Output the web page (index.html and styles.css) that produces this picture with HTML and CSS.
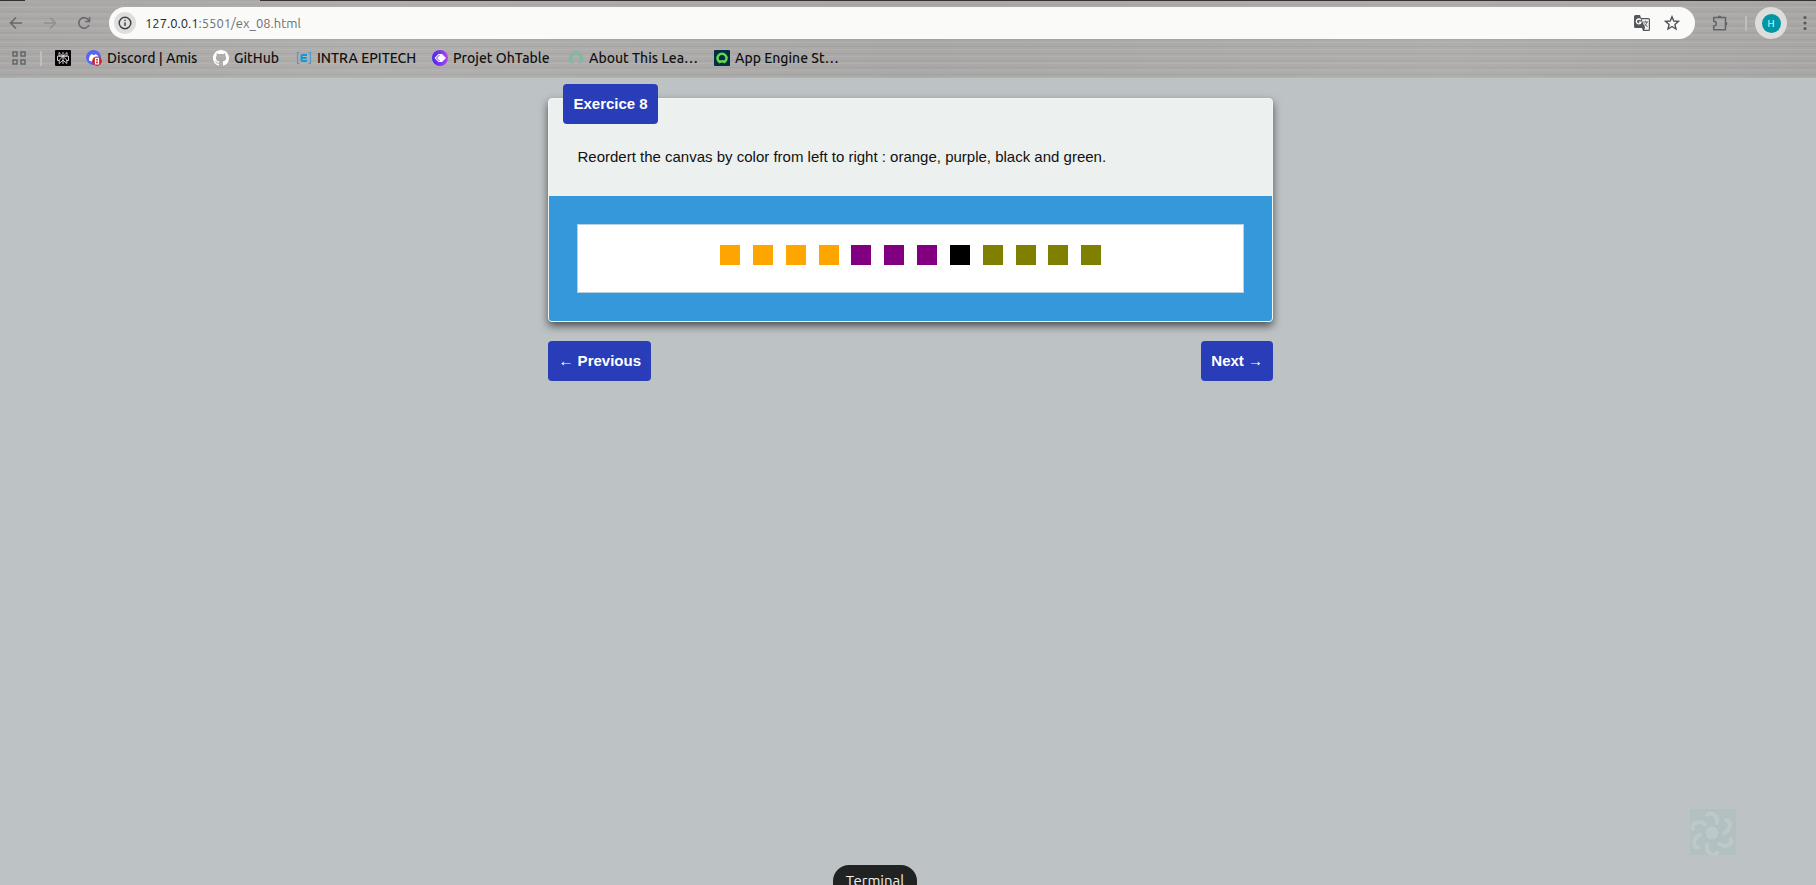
FILE: index.html
```html
<!DOCTYPE html>
<html lang="en">
<head>
<meta charset="utf-8">
<title>Exercice 8</title>
<link rel="stylesheet" href="styles.css">
</head>
<body>
<header class="browser">
  <div class="tab-strip"><span class="tab-active"></span></div>
  <div class="toolbar">
    <nav class="nav-buttons" aria-label="Navigation">
      <button class="icon-button" aria-label="Back"><svg width="14" height="14" viewBox="0 0 14 14"><path d="M13 7H2M7 1.5L1.5 7L7 12.500" fill="none" stroke="#66686b" stroke-width="1.6"/></svg></button>
      <button class="icon-button" aria-label="Forward"><svg width="14" height="14" viewBox="0 0 14 14"><path d="M1 7H12M7 1.500L12.500 7L7 12.500" fill="none" stroke="#8f8f90" stroke-width="1.600"/></svg></button>
      <button class="icon-button" aria-label="Reload"><svg width="14" height="14" viewBox="0 0 14 14"><path d="M12 9A5.300 5.300 0 1 1 11.500 4L12.600 5.200" fill="none" stroke="#66686b" stroke-width="1.600"/><path d="M13.300 1V6.200H8.100V4.800H11.800V1Z" fill="#66686b"/></svg></button>
    </nav>
    <div class="address-bar">
      <button class="site-info" aria-label="Site information"><svg width="14" height="14" viewBox="0 0 14 14"><circle cx="7" cy="7" r="5.800" fill="none" stroke="#3c4043" stroke-width="1.400"/><path d="M7 6.200V10M7 3.700V5.100" stroke="#3c4043" stroke-width="1.400"/></svg></button>
      <div class="address" aria-label="Address"><span class="address-host">127.0.0.1</span>:5501/ex_08.html</div>
      <button class="icon-button" aria-label="Translate"><svg width="16" height="16" viewBox="0 0 16 16"><path d="M1.500 0H6L7 3H14.500Q16 3 16 4.500V14.500Q16 16 14.500 16H9L8 13H1.500Q0 13 0 11.500V1.500Q0 0 1.500 0Z" fill="#55585b"/><path d="M7.600 4.200H14.800V14.800H10L11.100 13Z" fill="#f4f4f4"/><path d="M6.700 5A2.400 2.400 0 1 0 7 7.200H4.900" fill="none" stroke="#fff" stroke-width="1.300"/><path d="M9.200 7H14M11.600 5.800V7M13 7Q12.300 10.200 9.800 11.600M10.400 8.500L13.600 12" fill="none" stroke="#66686b"/></svg></button>
      <button class="icon-button" aria-label="Bookmark this page"><svg width="16" height="16" viewBox="0 0 16 16"><path d="M8 1.700L9.800 6L14.500 6.400L10.900 9.400L12 14L8 11.500L4 14L5.100 9.400L1.500 6.400L6.200 6Z" fill="none" stroke="#505356" stroke-width="1.400"/></svg></button>
    </div>
    <div class="toolbar-end">
      <button class="icon-button" aria-label="Extensions"><svg width="17" height="17" viewBox="0 0 17 17"><path d="M1.700 2.500H13.500V14.800H1.700V11C5 10.900 5 6.400 1.700 6.300Z" fill="none" stroke="#626467" stroke-width="1.500" stroke-linejoin="round"/><path d="M5.800 2.400A1.800 1.800 0 0 1 9.400 2.400ZM13.500 6.800A1.900 1.900 0 0 1 13.500 10.600Z" fill="#626467"/></svg></button>
      <span class="divider"></span>
      <button class="profile" aria-label="Profile"><span class="profile-initial">H</span></button>
      <button class="icon-button" aria-label="Menu"><svg width="4" height="16" viewBox="0 0 4 16"><g fill="#58595b"><circle cx="2" cy="2.500" r="1.600"/><circle cx="2" cy="8" r="1.600"/><circle cx="2" cy="13.500" r="1.600"/></g></svg></button>
    </div>
  </div>
  <nav class="bookmarks" aria-label="Bookmarks">
    <button class="icon-button" aria-label="Tab groups"><svg width="14" height="14" viewBox="0 0 14 14"><path d="M1 1H5V5H1ZM9 1H13V5H9ZM1 9H5V13H1ZM9 9H13V13H9Z" fill="none" stroke="#626467" stroke-width="1.500"/></svg></button>
    <span class="divider"></span>
    <a class="bookmark" href="#" aria-label="Perplexity"><svg width="16" height="16" viewBox="0 0 16 16"><rect width="16" height="16" rx="1" fill="#050505"/><path d="M8 2V14M4 2.500L8 6.300L12 2.500V6H4ZM2.500 6.200H13.500V10.500H11.800M4.200 10.500H2.500V6.200M8 6.500L4.200 10V13.500L8 10.200L11.800 13.500V10Z" fill="none" stroke="#ddd" stroke-width=".9"/></svg></a>
    <a class="bookmark" href="#"><svg width="16" height="16" viewBox="0 0 16 16"><circle cx="7.500" cy="7.500" r="7.500" fill="#5865f2"/><path d="M3 10.500Q3 6 5 4.500L6.500 4.300L7 5H8.500L9 4.300Q11 4.300 12.500 6.500V10L5 11.500Z" fill="#fff"/><circle cx="11" cy="11.200" r="4.800" fill="#d3202e"/><path d="M9.500 8.300H12.500V13.800H9.500ZM9.500 11H12.500" fill="none" stroke="#fff" stroke-width="1.200"/></svg><span>Discord | Amis</span></a>
    <a class="bookmark" href="#"><svg width="16" height="16" viewBox="0 0 16 16"><path fill="#fff" d="M8 0C3.580 0 0 3.580 0 8c0 3.540 2.290 6.530 5.470 7.590.4.070.55-.17.550-.38 0-.19-.01-.82-.01-1.490-2.010.37-2.530-.49-2.690-.94-.09-.23-.48-.94-.82-1.130-.28-.15-.68-.52-.01-.53.63-.01 1.080.58 1.230.82.72 1.210 1.870.87 2.330.66.07-.52.28-.87.510-1.070-1.780-.2-3.640-.89-3.640-3.950 0-.87.310-1.590.82-2.150-.08-.2-.36-1.020.08-2.120 0 0 .67-.21 2.200.82a7.600 7.600 0 0 1 4 0c1.530-1.040 2.200-.82 2.200-.82.440 1.100.16 1.920.08 2.120.51.560.82 1.270.82 2.150 0 3.070-1.870 3.750-3.650 3.950.29.250.54.730.54 1.480 0 1.070-.01 1.930-.01 2.200 0 .21.150.46.550.38A8 8 0 0 0 16 8c0-4.420-3.580-8-8-8z"/></svg><span>GitHub</span></a>
    <a class="bookmark" href="#"><svg width="16" height="16" viewBox="0 0 16 16"><path d="M3.500 2.500H1.500V13.500H3.500M12.500 2.500H14.500V13.500H12.500" fill="none" stroke="#4d9dc8" stroke-width="1.200"/><path d="M11 5H6.500Q5.500 5 5.500 6V10Q5.500 11 6.500 11H11M5.500 8H10.500" fill="none" stroke="#1697d8" stroke-width="2"/></svg><span>INTRA EPITECH</span></a>
    <a class="bookmark" href="#"><svg width="16" height="16" viewBox="0 0 16 16"><defs><linearGradient id="violet"><stop stop-color="#4528e8"/><stop offset="1" stop-color="#b343f5"/></linearGradient></defs><circle cx="8" cy="8" r="8" fill="url(#violet)"/><path d="M2.500 8L6.500 4H10L14 8L10 12H6.500Z" fill="#fff"/><path d="M7.500 5L4.500 8L7.500 11" fill="none" stroke="#733bf0" stroke-width="1"/></svg><span>Projet OhTable</span></a>
    <a class="bookmark" href="#"><svg width="16" height="16" viewBox="0 0 16 16"><path d="M5 12.500Q2 11 2.500 7.500A5.600 5.600 0 0 1 13.500 7.500Q14 11 11 12.500" fill="none" stroke="#82b7a0" stroke-width="3.500"/></svg><span>About This Lea…</span></a>
    <a class="bookmark" href="#"><svg width="16" height="16" viewBox="0 0 16 16"><rect width="16" height="16" rx="1" fill="#032d42"/><path d="M5.500 12A4.500 4.500 0 1 1 10.500 12Q8 10.500 5.500 12Z" fill="none" stroke="#62d84e" stroke-width="2.500"/></svg><span>App Engine St…</span></a>
  </nav>
</header>

<main class="page">
  <section class="card">
    <h1 class="badge">Exercice 8</h1>
    <p class="instruction">Reordert the canvas by color from left to right : orange, purple, black and green.</p>
    <div class="stage">
      <div class="canvas">
        <div class="squares">
          <span class="square orange"></span><span class="square orange"></span><span class="square orange"></span><span class="square orange"></span>
          <span class="square purple"></span><span class="square purple"></span><span class="square purple"></span>
          <span class="square black"></span>
          <span class="square green"></span><span class="square green"></span><span class="square green"></span><span class="square green"></span>
        </div>
      </div>
    </div>
  </section>
  <nav class="pager" aria-label="Exercises">
    <a class="pager-link" href="#">← Previous</a>
    <a class="pager-link" href="#">Next →</a>
  </nav>
</main>

<svg class="watermark" viewBox="0 0 46 46" aria-hidden="true"><rect width="46" height="46" fill="#b3c0c2"/><g fill="none" stroke="#bdc8ca" stroke-width="4" stroke-linecap="round"><path id="petal" d="M17 6Q19 3 23 5Q28 8 27 14"/><use href="#petal" transform="rotate(60 22 25)"/><use href="#petal" transform="rotate(120 22 25)"/><use href="#petal" transform="rotate(180 22 25)"/><use href="#petal" transform="rotate(240 22 25)"/><use href="#petal" transform="rotate(300 22 25)"/></g><circle cx="22" cy="24" r="6.500" fill="#bdc8ca"/></svg>
<div class="dock-tooltip" role="tooltip">Terminal</div>
</body>
</html>
```
FILE: styles.css
```css
* { box-sizing: border-box; }
body {
  margin: 0;
  min-height: 100vh;
  overflow: hidden;
  background: #bdc3c5;
  color: #111;
  font: 15px/20px "Liberation Sans", Arial, sans-serif;
}
button { padding: 0; border: 0; background: none; font: inherit; }
svg { display: block; }
a { color: inherit; text-decoration: none; }

.browser {
  background:
    repeating-linear-gradient(0deg, rgba(255,255,255,.08) 0 1px, transparent 1px 3px, rgba(0,0,0,.04) 3px 4px, transparent 4px 7px),
    linear-gradient(90deg, #aaa8a7, #b1afae 20%, #aaa8a7 50%, #b0aead 80%, #a9a7a6);
  font-family: Ubuntu, "Noto Sans", sans-serif;
  font-size: 14px;
}
.tab-strip { height: 1px; background: #353132; padding-left: 25px; }
.tab-active { display: block; width: 235px; height: 1px; background: #aaa8a7; }
.toolbar { display: flex; align-items: center; height: 44px; padding: 0 9px; }
.nav-buttons { display: flex; gap: 20px; width: 100px; }
.address-bar {
  display: flex;
  flex: 1;
  align-items: center;
  gap: 14px;
  height: 32px;
  padding: 0 15px 0 5px;
  border-radius: 16px;
  background: #fafaf9;
}
.site-info {
  display: grid;
  place-items: center;
  width: 22px;
  height: 22px;
  border-radius: 50%;
  background: #dededd;
}
.address { flex: 1; margin-left: -5px; color: #6c7077; font-size: 13px; }
.address-host { color: #24262a; }
.toolbar-end { display: flex; align-items: center; gap: 16px; padding-left: 17px; }
.divider { width: 2px; height: 15px; background: #bfbebd; }
.toolbar-end .divider { margin-right: -8px; }
.profile {
  display: grid;
  place-items: center;
  width: 32px;
  height: 32px;
  border-radius: 50%;
  background: #dedddc;
}
.profile-initial {
  width: 19px;
  height: 19px;
  border-radius: 50%;
  background: #0096a6;
  color: #fff;
  font-size: 10px;
  line-height: 19px;
}
.nav-buttons .icon-button { display: grid; place-items: center; width: 14px; height: 14px; }

.bookmarks {
  display: grid;
  grid-template-columns: 28px 15px 31px 127px 83px 136px 136px 146px 150px;
  align-items: center;
  height: 33px;
  padding: 0 12px 7px;
  color: #111;
  font-weight: 500;
  white-space: nowrap;
}
.bookmark { display: flex; align-items: center; gap: 5px; }
.bookmark svg { flex: none; }

.page { width: 39.9%; min-width: 320px; margin: 0 29.9% 0 auto; padding-top: 20px; }
.card {
  position: relative;
  border: 1px solid #f4f6f6;
  border-radius: 4px;
  background: #ecf0ef;
  box-shadow: 0 4px 8px rgba(0,0,0,.6);
}
.badge, .pager-link {
  padding: 10px;
  border-radius: 4px;
  background: #293db8;
  color: #fff;
  font-size: 15px;
  font-weight: bold;
  line-height: 20px;
}
.badge { position: absolute; top: -15px; left: 14px; margin: 0; }
.instruction { margin: 0; padding: 48px 28px 29px; }
.stage { padding: 28px; border-radius: 0 0 3px 3px; background: #3598db; }
.canvas { height: 69px; padding: 20px; border: 1px solid #b8d0df; background: #fff; }
.squares { display: flex; justify-content: space-between; max-width: 381px; margin: 0 auto; }
.square { width: 20px; height: 20px; }
.orange { background: #ffa500; }
.purple { background: #800080; }
.black { background: #000; }
.green { background: #808000; }
.pager { display: flex; justify-content: space-between; margin-top: 19px; }

.watermark { position: fixed; right: 80px; bottom: 30px; width: 46px; height: 46px; }
.dock-tooltip {
  position: fixed;
  left: 50%;
  bottom: -15px;
  width: 84px;
  height: 35px;
  margin-left: -75px;
  border-radius: 16px;
  background: #202322;
  color: #f2f2f2;
  font: 15px/32px Ubuntu, "Noto Sans", sans-serif;
  text-align: center;
}
```
